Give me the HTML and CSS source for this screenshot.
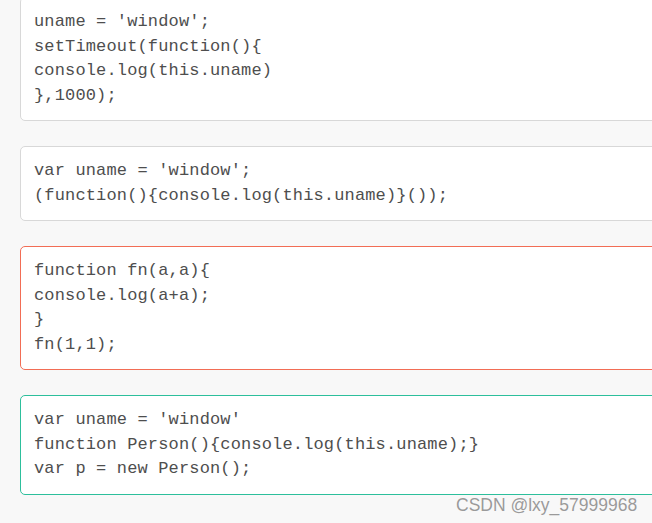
FILE: index.html
```html
<!DOCTYPE html>
<html>
<head>
<meta charset="utf-8">
<link rel="stylesheet" href="styles.css">
</head>
<body>
<div class="page">
<pre class="code">uname = 'window';
setTimeout(function(){
console.log(this.uname)
},1000);</pre>
<pre class="code">var uname = 'window';
(function(){console.log(this.uname)}());</pre>
<pre class="code red">function fn(a,a){
console.log(a+a);
}
fn(1,1);</pre>
<pre class="code green">var uname = 'window'
function Person(){console.log(this.uname);}
var p = new Person();</pre>
</div>
<div class="watermark">CSDN @lxy_57999968</div>
</body>
</html>
```
FILE: styles.css
```css
html, body {
  margin: 0;
  padding: 0;
  background: #f8f8f8;
  overflow: hidden;
}
.page {
  margin-top: -3px;
  padding-left: 20px;
  display: flex;
  flex-direction: column;
  gap: 25px;
}
.code {
  margin: 0;
  width: 700px;
  box-sizing: border-box;
  background: #fff;
  border: 1px solid #d8d8d8;
  border-radius: 5px;
  padding: 12px 13px;
  font-family: "Liberation Mono", "Courier New", monospace;
  font-size: 17px;
  letter-spacing: 0.15px;
  line-height: 24.5px;
  color: #4e4e4e;
}
.red { border-color: #f26d55; }
.green { border-color: #2dbf9c; }
.watermark {
  position: absolute;
  left: 456px;
  top: 495px;
  font-family: "Liberation Sans", Arial, sans-serif;
  font-size: 17.5px;
  color: #9a9a9a;
  text-shadow: 0 0 1px #fff;
}
```
